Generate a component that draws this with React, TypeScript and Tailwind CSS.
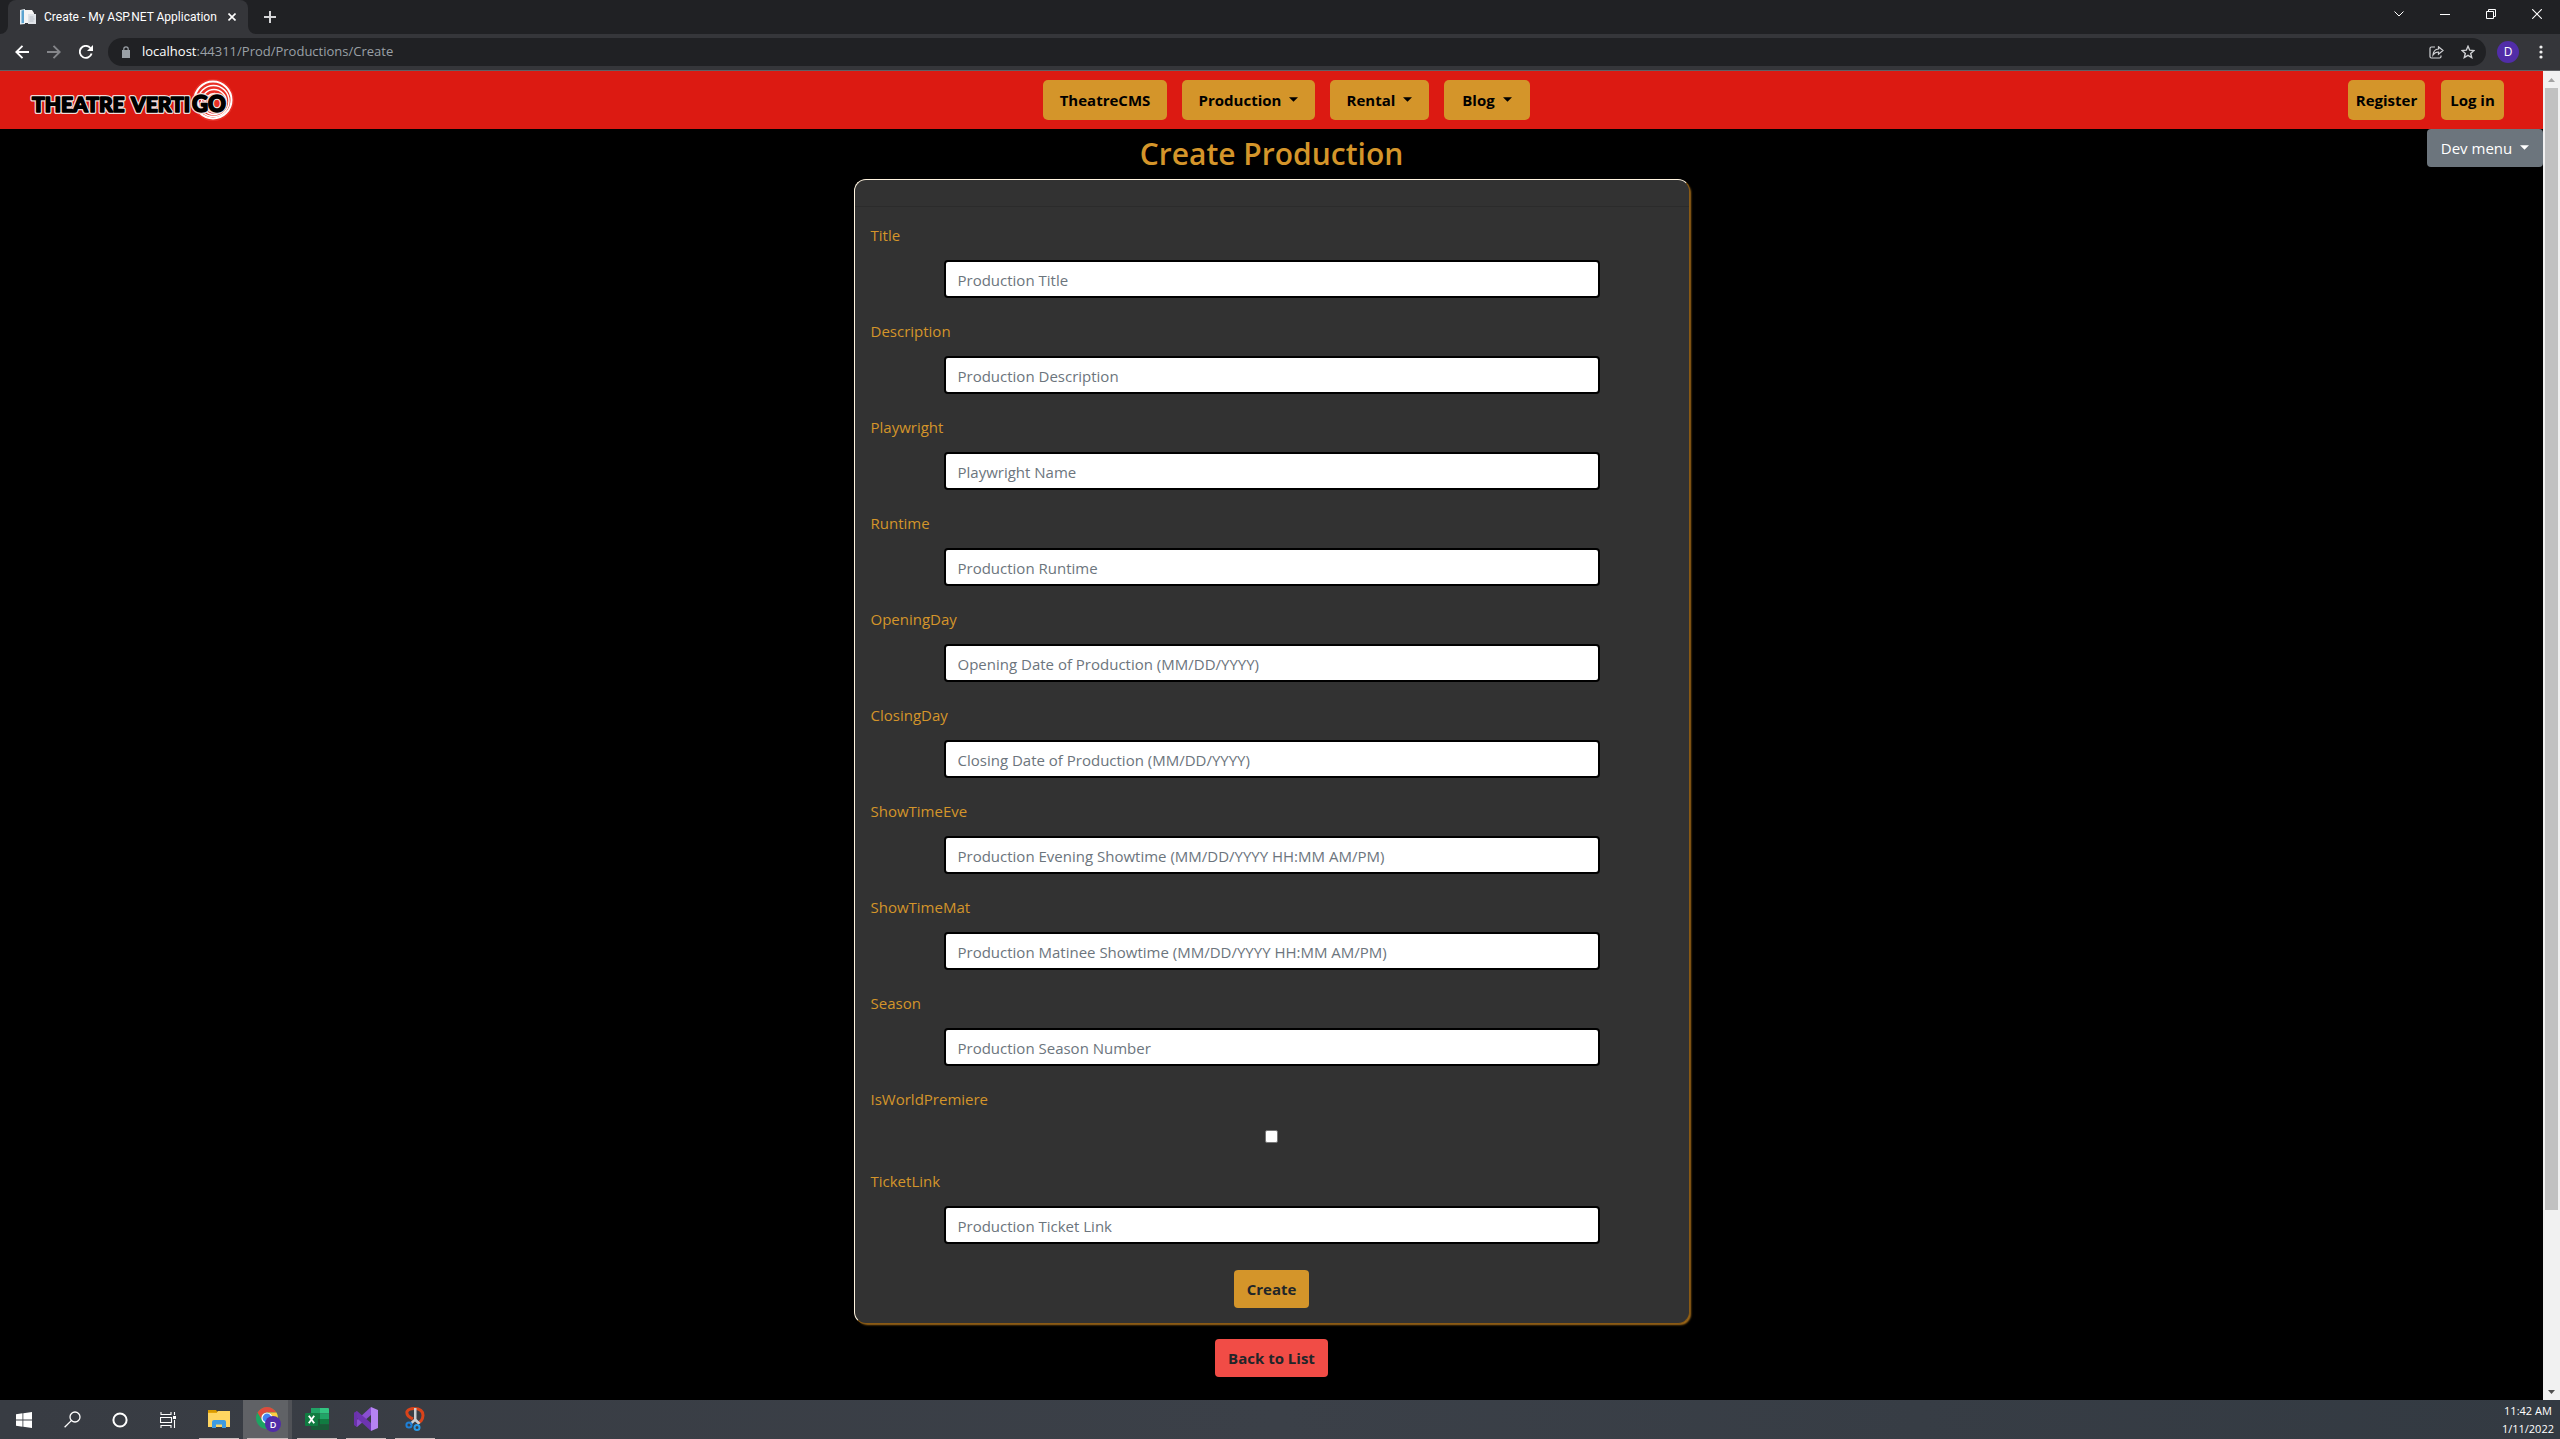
import type { ReactNode } from "react";

type Field = { id: string; label: string; placeholder?: string; checkbox?: boolean };

const fields: Field[] = [
  { id: "title", label: "Title", placeholder: "Production Title" },
  { id: "description", label: "Description", placeholder: "Production Description" },
  { id: "playwright", label: "Playwright", placeholder: "Playwright Name" },
  { id: "runtime", label: "Runtime", placeholder: "Production Runtime" },
  { id: "opening", label: "OpeningDay", placeholder: "Opening Date of Production (MM/DD/YYYY)" },
  { id: "closing", label: "ClosingDay", placeholder: "Closing Date of Production (MM/DD/YYYY)" },
  { id: "eve", label: "ShowTimeEve", placeholder: "Production Evening Showtime (MM/DD/YYYY HH:MM AM/PM)" },
  { id: "mat", label: "ShowTimeMat", placeholder: "Production Matinee Showtime (MM/DD/YYYY HH:MM AM/PM)" },
  { id: "season", label: "Season", placeholder: "Production Season Number" },
  { id: "premiere", label: "IsWorldPremiere", checkbox: true },
  { id: "ticket", label: "TicketLink", placeholder: "Production Ticket Link" },
];

function IconButton({ label, className = "", children }: { label: string; className?: string; children: ReactNode }) {
  return (
    <button type="button" aria-label={label} className={`flex shrink-0 items-center justify-center ${className}`}>
      {children}
    </button>
  );
}

function TabStrip() {
  return (
    <div className="flex h-[34px] items-start bg-[#202124] text-white">
      <svg width="8" height="8" viewBox="0 0 8 8" className="shrink-0 self-end">
        <path d="M8 0v8H0a8 8 0 0 0 8-8z" fill="#35363a" />
      </svg>
      <div className="flex h-[34px] w-[240px] shrink-0 items-center rounded-t-lg bg-[#35363a] pr-2 pl-3">
        <svg width="16" height="16" viewBox="0 0 16 16" className="shrink-0">
          <path d="M0 1l5-1v15l-5 .500z" fill="#e8eef2" />
          <path d="M1.500 1.500l2.500-.5v13l-2.500.3z" fill="#5ba3cf" />
          <path d="M4 1h8l2 3v10H4z" fill="#f5f5f5" />
          <path d="M8 5h8v10H8z" fill="#dfe3e8" />
          <path d="M9.500 8h4M9.500 10h5M9.500 12h4" stroke="#b9c0c8" strokeWidth="1" />
        </svg>
        <span className="ml-2 flex-1 font-['Roboto','Open_Sans',sans-serif] text-xs whitespace-nowrap">
          Create - My ASP.NET Application
        </span>
        <IconButton label="Close tab" className="size-4">
          <svg width="8" height="8" viewBox="0 0 8 8" stroke="#fff" strokeWidth="1.600">
            <path d="M.5.5l7 7M7.500.5l-7 7" />
          </svg>
        </IconButton>
      </div>
      <svg width="8" height="8" viewBox="0 0 8 8" className="shrink-0 self-end">
        <path d="M0 0v8h8a8 8 0 0 1-8-8z" fill="#35363a" />
      </svg>
      <IconButton label="New tab" className="h-[34px] w-7">
        <svg width="12" height="12" viewBox="0 0 12 12" stroke="#d5d6d8" strokeWidth="2">
          <path d="M6 0v12M0 6h12" />
        </svg>
      </IconButton>
      <div className="ml-auto flex">
        <IconButton label="Search tabs" className="h-7 w-[46px]">
          <svg width="10" height="6" viewBox="0 0 10 6" fill="none" stroke="#fff">
            <path d="M.5.5L5 5 9.500.5" />
          </svg>
        </IconButton>
        <IconButton label="Minimize" className="h-7 w-[46px]">
          <svg width="10" height="1" viewBox="0 0 10 1">
            <path d="M0 0h10v1H0z" fill="#fff" />
          </svg>
        </IconButton>
        <IconButton label="Restore" className="h-7 w-[46px]">
          <svg width="10" height="10" viewBox="0 0 10 10" fill="none" stroke="#fff">
            <path d="M.5 2.500h7v7h-7zM2.500 2.500v-2h7v7h-2" />
          </svg>
        </IconButton>
        <IconButton label="Close" className="h-7 w-[46px]">
          <svg width="10" height="10" viewBox="0 0 10 10" stroke="#fff" strokeWidth="1.100">
            <path d="M.2.2l9.600 9.600M9.800.2L.2 9.800" />
          </svg>
        </IconButton>
      </div>
    </div>
  );
}

function Toolbar() {
  return (
    <div className="flex h-[37px] items-center border-b border-[#5f6165] bg-[#35363a] px-1.5">
      <IconButton label="Back" className="w-8">
        <svg width="14" height="14" viewBox="0 0 14 14" fill="none" stroke="#fff" strokeWidth="1.900">
          <path d="M14 7H1.500M7.500.8L1.300 7l6.200 6.200" />
        </svg>
      </IconButton>
      <IconButton label="Forward" className="w-8">
        <svg width="14" height="14" viewBox="0 0 14 14" fill="none" stroke="#85868a" strokeWidth="1.900">
          <path d="M0 7h12.500M6.500.8L12.700 7l-6.200 6.200" />
        </svg>
      </IconButton>
      <IconButton label="Reload" className="w-8">
        <svg width="14" height="14" viewBox="0 0 14 14" fill="none" stroke="#fff" strokeWidth="1.900">
          <path d="M12.600 8.500A6 6 0 1 1 11.400 3" />
          <path d="M14 0v6H8z" fill="#fff" stroke="none" />
        </svg>
      </IconButton>
      <div className="ml-1.5 flex h-7 flex-1 items-center rounded-full bg-[#202124] pr-0.5 pl-3.5">
        <svg width="8" height="12" viewBox="0 0 8 12" className="shrink-0">
          <path d="M0 4h8v8H0z" fill="#9aa0a6" />
          <path d="M1.800 4.500V3a2.200 2.200 0 0 1 4.400 0v1.500" fill="none" stroke="#9aa0a6" strokeWidth="1.200" />
        </svg>
        <a href="#address" className="ml-3 flex-1 text-[13px] text-[#9aa0a6]">
          <span className="text-white">localhost</span>:44311/Prod/Productions/Create
        </a>
        <IconButton label="Share" className="w-8">
          <svg width="15" height="13" viewBox="0 0 15 13" fill="none" stroke="#d0d1d4" strokeWidth="1.200">
            <path d="M6 1H2.500A1.500 1.500 0 0 0 1 2.500v8A1.500 1.500 0 0 0 2.500 12h8a1.500 1.500 0 0 0 1.500-1.500V9.500" />
            <path d="M9.500.8L14 4.500 9.500 8.200V6Q6 6 4 9q.4-5.500 5.500-6z" />
          </svg>
        </IconButton>
        <IconButton label="Bookmark" className="w-8">
          <svg width="14" height="14" viewBox="0 0 14 14" fill="none" stroke="#d0d1d4" strokeWidth="1.400">
            <path d="M7 1.300l1.700 3.900 4.200.4-3.200 2.800 1 4.100L7 10.300l-3.700 2.200 1-4.100L1.100 5.600l4.200-.4z" />
          </svg>
        </IconButton>
      </div>
      <button
        type="button"
        aria-label="Profile"
        className="ml-[11px] size-[22px] shrink-0 rounded-full bg-[#512da8] text-center text-xs leading-[22px] text-white"
      >
        D
      </button>
      <IconButton label="Menu" className="ml-2 w-[27px]">
        <svg width="4" height="14" viewBox="0 0 4 14" fill="#f1f1f1">
          <circle cx="2" cy="2" r="1.600" />
          <circle cx="2" cy="7" r="1.600" />
          <circle cx="2" cy="12" r="1.600" />
        </svg>
      </IconButton>
    </div>
  );
}

function LogoWords() {
  return (
    <>
      <text x="3" y="34">THEATRE</text>
      <text x="102" y="34">VERTI</text>
      <text x="163" y="34" fontSize="22">GO</text>
    </>
  );
}

function Logo() {
  return (
    <svg width="206" height="44" viewBox="0 0 206 44" role="img" aria-label="Theatre Vertigo">
      <circle cx="184" cy="22" r="21" fill="#ee3a30" opacity="0.700" />
      <g fill="none" stroke="#fff">
        <circle cx="184" cy="22" r="18.500" strokeWidth="2" />
        <circle cx="184.500" cy="23" r="15.500" strokeWidth="1.500" />
        <circle cx="185" cy="24" r="12.500" strokeWidth="1.500" />
        <circle cx="185.500" cy="25" r="9.500" strokeWidth="1.300" />
      </g>
      <g fontFamily="Lato, sans-serif" fontWeight="900" fontSize="21" strokeLinejoin="round">
        <g fill="#fff" stroke="#f3dcd8" strokeWidth="4">
          <LogoWords />
        </g>
        <g fill="#000" stroke="#000" strokeWidth="1.600">
          <LogoWords />
        </g>
      </g>
    </svg>
  );
}

function Caret() {
  return (
    <svg width="9" height="5" viewBox="0 0 10 5" className="mb-0.5 ml-2 shrink-0" fill="currentColor">
      <path d="M0 0h10L5 5z" />
    </svg>
  );
}

function NavBar() {
  const item = "flex h-10 items-center justify-center rounded-[5px] bg-[#d4952a] text-[15px] font-bold text-black";
  return (
    <nav className="flex items-center bg-[#dc1a12] pt-[9px] pr-[39px] pb-[9px] pl-[29px]">
      <div className="flex-1">
        <a href="#home" className="-my-1 block w-fit">
          <Logo />
        </a>
      </div>
      <div className="ml-10 flex gap-[15px]">
        <a href="#cms" className={`${item} w-[124px]`}>TheatreCMS</a>
        <button type="button" className={`${item} w-[133px]`}>Production<Caret /></button>
        <button type="button" className={`${item} w-[99px]`}>Rental<Caret /></button>
        <button type="button" className={`${item} w-[86px]`}>Blog<Caret /></button>
      </div>
      <div className="flex flex-1 justify-end gap-4">
        <a href="#register" className={`${item} w-[77px]`}>Register</a>
        <a href="#login" className={`${item} w-[63px]`}>Log in</a>
      </div>
    </nav>
  );
}

function FormField({ field }: { field: Field }) {
  return (
    <div className="flex flex-col gap-[13px]">
      <label htmlFor={field.id} className="w-fit leading-6 text-[#d4952a]">
        {field.label}
      </label>
      {field.checkbox ? (
        <div className="flex h-6 items-center justify-center">
          <input
            id={field.id}
            type="checkbox"
            className="size-[13px] appearance-none rounded-[2px] border border-[#767676] bg-white"
          />
        </div>
      ) : (
        <input
          id={field.id}
          type="text"
          placeholder={field.placeholder}
          className="mx-[73px] h-[38px] min-w-0 rounded border-2 border-black bg-white px-3 pt-0.5 text-[#495057] placeholder:text-[#6c757d]"
        />
      )}
    </div>
  );
}

function Page() {
  return (
    <div className="relative min-w-0 flex-1 bg-black text-[15px]">
      <NavBar />
      <button
        type="button"
        className="absolute right-0 flex h-[38px] w-[116px] items-center justify-center rounded bg-[#6c757d] text-white"
      >
        Dev menu
        <Caret />
      </button>
      <main className="flex flex-col items-center pb-[22px]">
        <h1 className="mt-1.5 text-[30px] leading-[38px] font-semibold text-[#d4952a]">Create Production</h1>
        <form className="mt-1.5 w-full max-w-[836px] rounded-[12px] border border-t-[#fff4e0] border-r-[#8a5a14] border-b-[#8a5a14] border-l-[#fff4e0] bg-[#323232] pb-[15px] shadow-[2px_2px_2px_-1px_#a86f1a]">
          <hr className="mt-[26px] border-[#2b2b2b]" />
          <div className="mt-4 flex flex-col gap-[21px] px-4">
            {fields.map((f) => (
              <FormField key={f.id} field={f} />
            ))}
          </div>
          <button
            type="submit"
            className="mx-auto mt-[26px] block h-[38px] w-[75px] rounded bg-[#d4952a] font-bold text-[#212529]"
          >
            Create
          </button>
        </form>
        <a
          href="#list"
          className="mt-[15px] flex h-[38px] w-[113px] items-center justify-center rounded bg-[#f14c46] font-bold whitespace-nowrap text-[#212529]"
        >
          Back to List
        </a>
      </main>
    </div>
  );
}

function ScrollBar() {
  return (
    <div className="flex w-[17px] shrink-0 flex-col bg-[#f1f1f1]">
      <IconButton label="Scroll up" className="h-[17px]">
        <svg width="7" height="4" viewBox="0 0 7 4" fill="#a3a3a3">
          <path d="M3.500 0L7 4H0z" />
        </svg>
      </IconButton>
      <div className="mx-0.5 grow-[1122] bg-[#c1c1c1]" />
      <div className="grow-[173]" />
      <IconButton label="Scroll down" className="h-[17px]">
        <svg width="7" height="4" viewBox="0 0 7 4" fill="#505050">
          <path d="M0 0h7L3.500 4z" />
        </svg>
      </IconButton>
    </div>
  );
}

function TaskApp({ label, active = false, children }: { label: string; active?: boolean; children: ReactNode }) {
  return (
    <button
      type="button"
      aria-label={label}
      className={`flex h-full w-[49px] flex-col items-center justify-between ${active ? "border-r-4 border-[#505257] bg-[#606266] pl-1" : ""}`}
    >
      <span className="flex flex-1 items-center">{children}</span>
      <span className={`h-px bg-[#c9bdbd] ${active ? "w-full" : "w-10"}`} />
    </button>
  );
}

function TaskBar() {
  return (
    <footer className="flex h-[39px] items-center bg-linear-to-r from-[#383c43] via-[#3b4048] to-[#333a42] text-white">
      <IconButton label="Start" className="w-12">
        <svg width="16" height="16" viewBox="0 0 16 16" fill="#fff">
          <path d="M0 2.200l6.500-.9v6.300H0zM7.300 1.200L16 0v7.600H7.300zM0 8.400h6.500v6.300L0 13.800zM7.300 8.400H16V16l-8.700-1.200z" />
        </svg>
      </IconButton>
      <IconButton label="Search" className="w-12">
        <svg width="17" height="17" viewBox="0 0 17 17" fill="none" stroke="#fff" strokeWidth="1.300">
          <circle cx="11" cy="6" r="5" />
          <path d="M7.300 9.600L.6 16.300" />
        </svg>
      </IconButton>
      <IconButton label="Cortana" className="w-12">
        <svg width="16" height="16" viewBox="0 0 16 16" fill="none" stroke="#fff" strokeWidth="2">
          <circle cx="8" cy="8" r="6.600" />
        </svg>
      </IconButton>
      <IconButton label="Task view" className="w-12">
        <svg width="17" height="16" viewBox="0 0 17 16" fill="none" stroke="#fff" strokeWidth="1.100">
          <path d="M1 0v2.500h10V0M.5 5.500h11v5H.5zM1 16v-2.500h10V16M14.500 0v3M14.500 8v8" />
          <path d="M13 4h3v3h-3z" fill="#fff" stroke="none" />
        </svg>
      </IconButton>
      <div className="ml-0.5 flex h-full">
        <TaskApp label="File Explorer">
          <svg width="22" height="18" viewBox="0 0 22 18">
            <path d="M0 0h8l1.500 2H0z" fill="#d99a00" />
            <path d="M0 2h9l1-1h12v16H0z" fill="#ffd561" />
            <path d="M0 2h9v1H0z" fill="#e5a50a" />
            <path d="M4 18v-6q0-2 2-2h10q2 0 2 2v6h-4v-3.500H8V18z" fill="#3d9be0" />
          </svg>
        </TaskApp>
        <TaskApp label="Chrome" active>
          <svg width="26" height="26" viewBox="0 0 26 26">
            <circle cx="12" cy="12" r="11" fill="#1da462" />
            <path d="M2.500 6.500A11 11 0 0 1 21.500 6.500H12a5.500 5.500 0 0 0-4.800 8.200z" fill="#dd4b3e" />
            <path d="M12 6.500h9.500A11 11 0 0 1 12 23l4.800-8.300A5.500 5.500 0 0 0 12 6.500z" fill="#ffcd40" />
            <circle cx="12" cy="12" r="5.600" fill="#fff" />
            <circle cx="12" cy="12" r="4.400" fill="#4285f4" />
            <circle cx="18" cy="18" r="8" fill="#512da8" />
            <text x="18" y="21.500" textAnchor="middle" fontSize="9" fontWeight="600" fill="#fff">D</text>
          </svg>
        </TaskApp>
        <TaskApp label="Excel">
          <svg width="24" height="22" viewBox="0 0 24 22">
            <path d="M6 0h9v5.500H6z" fill="#21a366" />
            <path d="M15 0h8q1 0 1 1v4.500h-9z" fill="#33c481" />
            <path d="M6 5.500h9V11H6z" fill="#107c41" />
            <path d="M15 5.500h9V11h-9z" fill="#21a366" />
            <path d="M6 11h9v5.500H6z" fill="#185c37" />
            <path d="M15 11h9v5.500h-9z" fill="#107c41" />
            <path d="M6 16.500h18V21q0 1-1 1H7q-1 0-1-1z" fill="#185c37" />
            <path d="M1 5h11q1 0 1 1v11q0 1-1 1H1q-1 0-1-1V6q0-1 1-1z" fill="#107c41" />
            <path d="M3.800 7.800l5.400 7.400M9.200 7.800l-5.400 7.400" stroke="#fff" strokeWidth="1.900" />
          </svg>
        </TaskApp>
        <TaskApp label="Visual Studio">
          <svg width="24" height="24" viewBox="0 0 24 24">
            <path d="M17 0l-17 15.500v2L3 20 17 8z" fill="#8a4fd0" />
            <path d="M3 4L0 6v2.500L17 24v-8z" fill="#6d34b0" />
            <path d="M0 6l3-2v16l-3-2z" fill="#6a32ab" />
            <path d="M17 0l7 3v18l-7 3z" fill="#b583f2" />
          </svg>
        </TaskApp>
        <TaskApp label="Snipping Tool">
          <svg width="20" height="24" viewBox="0 0 20 24">
            <path d="M8 12Q1 9 2 4.500 4 1.500 9 1.500q9 0 9 7Q17.500 15 12 16" fill="none" stroke="#d9431a" strokeWidth="3" />
            <path d="M9 1h2.500v11l4 4-2 1.500L10 14.500 6 18l-1.500-2L9 12z" fill="#c9ced3" />
            <circle cx="4" cy="18" r="2.600" fill="none" stroke="#1e7fd6" strokeWidth="2" />
            <circle cx="12" cy="20.500" r="2.500" fill="none" stroke="#2a9be8" strokeWidth="2" />
          </svg>
        </TaskApp>
      </div>
      <div className="mr-1.5 ml-auto text-center text-[11px] leading-[18px]">
        <div>11:42 AM</div>
        <div>1/11/2022</div>
      </div>
    </footer>
  );
}

export default function App() {
  return (
    <div className="flex min-h-screen flex-col bg-black font-['Open_Sans','Noto_Sans',sans-serif]">
      <TabStrip />
      <Toolbar />
      <div className="flex flex-1">
        <Page />
        <ScrollBar />
      </div>
      <TaskBar />
    </div>
  );
}
